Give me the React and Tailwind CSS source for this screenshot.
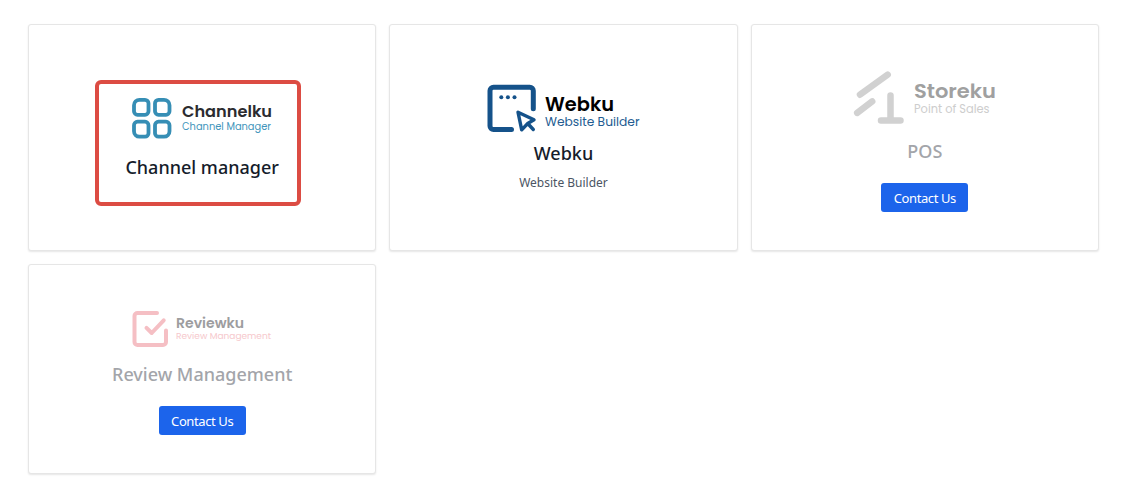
import clsx from "clsx";

function ChannelkuLogo() {
  return (
    <svg width="160" height="60" viewBox="122 88 160 60" className="shrink-0">
      <g fill="none" stroke="#368eb5" strokeWidth="3.8">
        <path d="M139.5 99.8H145a3.5 3.5 0 0 1 3.5 3.5v8a3.5 3.5 0 0 1-3.5 3.5h-7.5a3.5 3.5 0 0 1-3.5-3.5v-6a5.5 5.5 0 0 1 5.5-5.5z" />
        <path d="M164 99.8h-5.5a3.5 3.5 0 0 0-3.5 3.5v8a3.5 3.5 0 0 0 3.5 3.5h7.5a3.5 3.5 0 0 0 3.5-3.5v-6a5.5 5.5 0 0 0-5.5-5.5z" />
        <path d="M139.5 136.7H145a3.5 3.5 0 0 0 3.5-3.5v-8a3.5 3.5 0 0 0-3.5-3.5h-7.5a3.5 3.5 0 0 0-3.5 3.5v6a5.5 5.5 0 0 0 5.5 5.5z" />
        <path d="M164 136.700h-5.500a3.500 3.500 0 0 1-3.500-3.500v-8a3.500 3.500 0 0 1 3.500-3.500h7.500a3.500 3.500 0 0 1 3.500 3.500v6a5.500 5.500 0 0 1-5.500 5.500z" />
      </g>
      <text x="182" y="117" textLength="90" lengthAdjust="spacingAndGlyphs" className="fill-[#2b2b2f] font-[Poppins,Inter,sans-serif] text-[16px] font-semibold">
        Channelku
      </text>
      <text x="182" y="129.5" textLength="89" lengthAdjust="spacingAndGlyphs" className="fill-[#4295bb] font-[Poppins,Inter,sans-serif] text-[10px]">
        Channel Manager
      </text>
    </svg>
  );
}

function WebkuLogo() {
  return (
    <svg width="161" height="60" viewBox="483 80 161 60" className="shrink-0">
      <g fill="none" stroke="#15528a" strokeWidth="5" strokeLinecap="round" strokeLinejoin="round">
        <path d="M533.3 108.800V90.800a3.500 3.500 0 0 0-3.500-3.500h-36.300a3.500 3.500 0 0 0-3.500 3.500v35.300a3.500 3.500 0 0 0 3.500 3.500H511.500" />
        <path strokeWidth="3.400" d="M518 112.200l16 7.600-6.300 3.700-6 6.300zM527.700 123.500l5.600 6" />
      </g>
      <circle cx="501.300" cy="97.300" r="2" fill="#15528a" />
      <circle cx="507.900" cy="97.300" r="2" fill="#15528a" />
      <circle cx="514.500" cy="97.300" r="2" fill="#15528a" />
      <text x="545" y="111" textLength="69" lengthAdjust="spacingAndGlyphs" className="fill-black font-[Poppins,Inter,sans-serif] text-[19px] font-semibold">
        Webku
      </text>
      <text x="545" y="126" textLength="94.500" lengthAdjust="spacingAndGlyphs" className="fill-[#235c91] font-[Poppins,Inter,sans-serif] text-[12px]">
        Website Builder
      </text>
    </svg>
  );
}

function StorekuLogo() {
  return (
    <svg width="160" height="64" viewBox="845 66 160 64" className="shrink-0">
      <g fill="none" stroke="#d1d1d1" strokeWidth="6.500" strokeLinecap="round">
        <path d="M860 94.700l27.700-20" />
        <path d="M857.200 112.900l15-11.500" />
        <path d="M890.500 95.500V120M881 120.500h19.500" />
      </g>
      <text x="914" y="97.500" textLength="82" lengthAdjust="spacingAndGlyphs" className="fill-[#a0a0a0] font-[Poppins,Inter,sans-serif] text-[20px] font-semibold">
        Storeku
      </text>
      <text x="914" y="113" textLength="75.500" lengthAdjust="spacingAndGlyphs" className="fill-[#cdcdcd] font-[Poppins,Inter,sans-serif] text-[11.5px]">
        Point of Sales
      </text>
    </svg>
  );
}

function ReviewkuLogo() {
  return (
    <svg width="160" height="48" viewBox="122 305 160 48" className="shrink-0">
      <g fill="none" stroke="#f5bfc4" strokeWidth="4" strokeLinecap="round" strokeLinejoin="round">
        <path d="M157 313H137.500a3 3 0 0 0-3 3v26a3 3 0 0 0 3 3h25.500a3 3 0 0 0 3-3v-11.500" />
        <path d="M146.500 327.800l5.200 5.200 12-12.700" />
      </g>
      <text x="176" y="328" textLength="68" lengthAdjust="spacingAndGlyphs" className="fill-[#9d9d9f] font-[Poppins,Inter,sans-serif] text-[13.5px] font-semibold">
        Reviewku
      </text>
      <text x="176" y="338.500" textLength="95" lengthAdjust="spacingAndGlyphs" className="fill-[#f6c8cc] font-[Poppins,Inter,sans-serif] text-[9px]">
        Review Management
      </text>
    </svg>
  );
}

function Card({ className, children }) {
  return (
    <div className={clsx("relative flex flex-col items-center rounded-[3px] border border-[#e6e6e6] bg-white shadow-[0_1px_2px_rgba(0,0,0,0.1)]", className)}>
      {children}
    </div>
  );
}

function Title({ className, children }) {
  return (
    <h3 className={clsx("h-7 text-[18px] leading-[26px] font-medium whitespace-nowrap", className)}>
      {children}
    </h3>
  );
}

function ContactButton() {
  return (
    <button className="mt-[17px] h-[29px] w-[87px] rounded-[3px] bg-[#1c64eb] pt-px text-[13px] leading-[29px] tracking-[-0.4px] whitespace-nowrap text-white">
      Contact Us
    </button>
  );
}

export default function App() {
  return (
    <div className="min-h-screen bg-white pt-6 pl-7 font-['Noto_Sans',sans-serif]">
      <div className="grid w-[1071px] grid-cols-3 grid-rows-[227px_210px] gap-[13px]">
        <Card className="pt-[63px]">
          <ChannelkuLogo />
          <Title className="mt-1.5 text-[#151c2b]">Channel manager</Title>
          {/* highlighted product */}
          <div className="absolute top-[55px] left-[66px] h-[126px] w-[206px] rounded-[6px] border-4 border-[#dc4c43]" />
        </Card>

        <Card className="pt-[55px]">
          <WebkuLogo />
          <Title className="text-[#151c2b]">Webku</Title>
          <p className="mt-1.5 text-[12px] leading-[18px] text-[#4b5563]">Website Builder</p>
        </Card>

        <Card className="pt-[41px]">
          <StorekuLogo />
          <Title className="mt-2 text-[#a3a5aa]">POS</Title>
          <ContactButton />
        </Card>

        <Card className="pt-10">
          <ReviewkuLogo />
          <Title className="mt-2 text-[#a3a5aa]">Review Management</Title>
          <ContactButton />
        </Card>
      </div>
    </div>
  );
}
